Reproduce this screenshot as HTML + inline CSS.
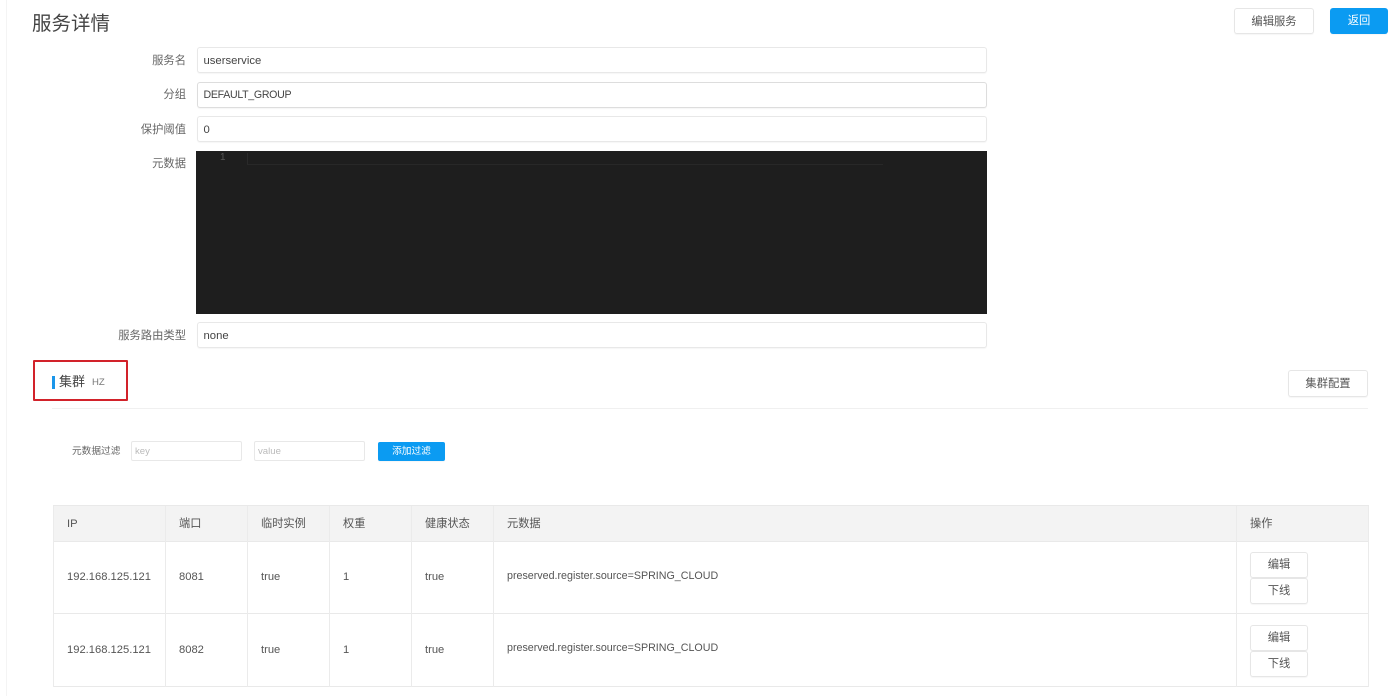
<!DOCTYPE html>
<html lang="zh">
<head>
<meta charset="utf-8">
<style>
html,body{margin:0;padding:0;background:#fff;}
body{width:1400px;height:696px;overflow:hidden;position:relative;font-family:"Liberation Sans","Noto Sans CJK SC",sans-serif;color:#555;font-size:12px;filter:blur(.35px);}
.a{position:absolute;box-sizing:border-box;white-space:nowrap;}
.in{left:197px;width:790px;height:26px;background:#fff;border:1px solid #e8e8e8;border-radius:3px;line-height:27px;padding-left:5.5px;color:#444;font-size:11.3px;box-shadow:0 1px 1px rgba(0,0,0,.04);}
.lb{right:1214px;text-align:right;font-size:11.3px;color:#666;line-height:16px;}
.btn{background:#fff;border:1px solid #e6e6e6;border-radius:3px;text-align:center;color:#555;font-size:11.3px;box-shadow:0 1px 1px rgba(0,0,0,.04);}
.pri{background:#0b9bf2;border:0;color:#fff;}
.h{background:#f3f3f3;}
.vl{width:1px;background:#ebebeb;top:506px;height:181px;}
.hl{left:53px;width:1316px;height:1px;background:#e9e9e9;}
.t{line-height:16px;font-size:11.2px;color:#555;}
.f{background:#fff;border:1px solid #e8e8e8;border-radius:2px;height:20px;width:111px;top:441px;color:#bbb;font-size:9.6px;line-height:19px;padding-left:3px;}
</style>
</head>
<body>
<div class="a" style="left:6px;top:0;width:1px;height:696px;background:#f4f4f4;"></div>

<div class="a" style="left:32px;top:11px;font-size:19.5px;line-height:26px;color:#444;">服务详情</div>
<div class="a btn" style="left:1234px;top:8px;width:80px;height:26px;line-height:26px;">编辑服务</div>
<div class="a btn pri" style="left:1330px;top:8px;width:58px;height:26px;line-height:27px;">返回</div>

<div class="a lb" style="top:53px;">服务名</div>
<div class="a in" style="top:47px;">userservice</div>
<div class="a lb" style="top:87px;">分组</div>
<div class="a in" style="top:82px;border-color:#ddd;font-size:10.6px;letter-spacing:-.3px;line-height:25px;">DEFAULT_GROUP</div>
<div class="a lb" style="top:122px;">保护阈值</div>
<div class="a in" style="top:116px;">0</div>
<div class="a lb" style="top:156px;">元数据</div>
<div class="a" style="left:196px;top:151px;width:791px;height:163px;background:#1e1e1e;"></div>
<div class="a" style="left:220px;top:151px;font-size:10px;line-height:14px;color:#555;">1</div>
<div class="a" style="left:247px;top:153px;width:636px;height:12px;border-left:1px solid #2a2a2a;border-bottom:1px solid #282828;"></div>
<div class="a lb" style="top:328px;">服务路由类型</div>
<div class="a in" style="top:322px;">none</div>

<div class="a" style="left:33px;top:360px;width:95px;height:41px;border:2.5px solid #d2222a;border-radius:1px;"></div>
<div class="a" style="left:52px;top:376px;width:3px;height:13px;background:#1a96ea;"></div>
<div class="a" style="left:59px;top:373px;font-size:13px;line-height:18px;color:#444;">集群</div>
<div class="a" style="left:92px;top:376px;font-size:9.6px;line-height:14px;color:#777;">HZ</div>
<div class="a btn" style="left:1288px;top:370px;width:80px;height:27px;line-height:26px;">集群配置</div>
<div class="a" style="left:52px;top:408px;width:1316px;height:1px;background:#f0f0f0;"></div>

<div class="a" style="left:72px;top:445px;font-size:9.7px;line-height:14px;color:#666;">元数据过滤</div>
<div class="a f" style="left:131px;">key</div>
<div class="a f" style="left:254px;">value</div>
<div class="a btn pri" style="left:378px;top:442px;width:67px;height:19px;line-height:19px;font-size:9.7px;border-radius:2px;">添加过滤</div>

<div class="a h" style="left:53px;top:506px;width:1316px;height:35px;"></div>
<div class="a hl" style="top:505px;"></div>
<div class="a hl" style="top:541px;"></div>
<div class="a hl" style="top:613px;"></div>
<div class="a hl" style="top:686px;"></div>
<div class="a vl" style="left:53px;"></div>
<div class="a vl" style="left:165px;"></div>
<div class="a vl" style="left:247px;"></div>
<div class="a vl" style="left:329px;"></div>
<div class="a vl" style="left:411px;"></div>
<div class="a vl" style="left:493px;"></div>
<div class="a vl" style="left:1236px;"></div>
<div class="a vl" style="left:1368px;"></div>

<div class="a t" style="left:67px;top:516px;">IP</div>
<div class="a t" style="left:179px;top:516px;">端口</div>
<div class="a t" style="left:261px;top:516px;">临时实例</div>
<div class="a t" style="left:343px;top:516px;">权重</div>
<div class="a t" style="left:425px;top:516px;">健康状态</div>
<div class="a t" style="left:507px;top:516px;">元数据</div>
<div class="a t" style="left:1250px;top:516px;">操作</div>

<div class="a t" style="left:67px;top:569px;">192.168.125.121</div>
<div class="a t" style="left:179px;top:569px;">8081</div>
<div class="a t" style="left:261px;top:569px;">true</div>
<div class="a t" style="left:343px;top:569px;">1</div>
<div class="a t" style="left:425px;top:569px;">true</div>
<div class="a t" style="left:507px;top:568px;font-size:10.7px;">preserved.register.source=SPRING_CLOUD</div>
<div class="a btn" style="left:1250px;top:552px;width:58px;height:26px;line-height:24px;">编辑</div>
<div class="a btn" style="left:1250px;top:578px;width:58px;height:26px;line-height:24px;">下线</div>

<div class="a t" style="left:67px;top:642px;">192.168.125.121</div>
<div class="a t" style="left:179px;top:642px;">8082</div>
<div class="a t" style="left:261px;top:642px;">true</div>
<div class="a t" style="left:343px;top:642px;">1</div>
<div class="a t" style="left:425px;top:642px;">true</div>
<div class="a t" style="left:507px;top:640px;font-size:10.7px;">preserved.register.source=SPRING_CLOUD</div>
<div class="a btn" style="left:1250px;top:625px;width:58px;height:26px;line-height:24px;">编辑</div>
<div class="a btn" style="left:1250px;top:651px;width:58px;height:26px;line-height:24px;">下线</div>
</body>
</html>
